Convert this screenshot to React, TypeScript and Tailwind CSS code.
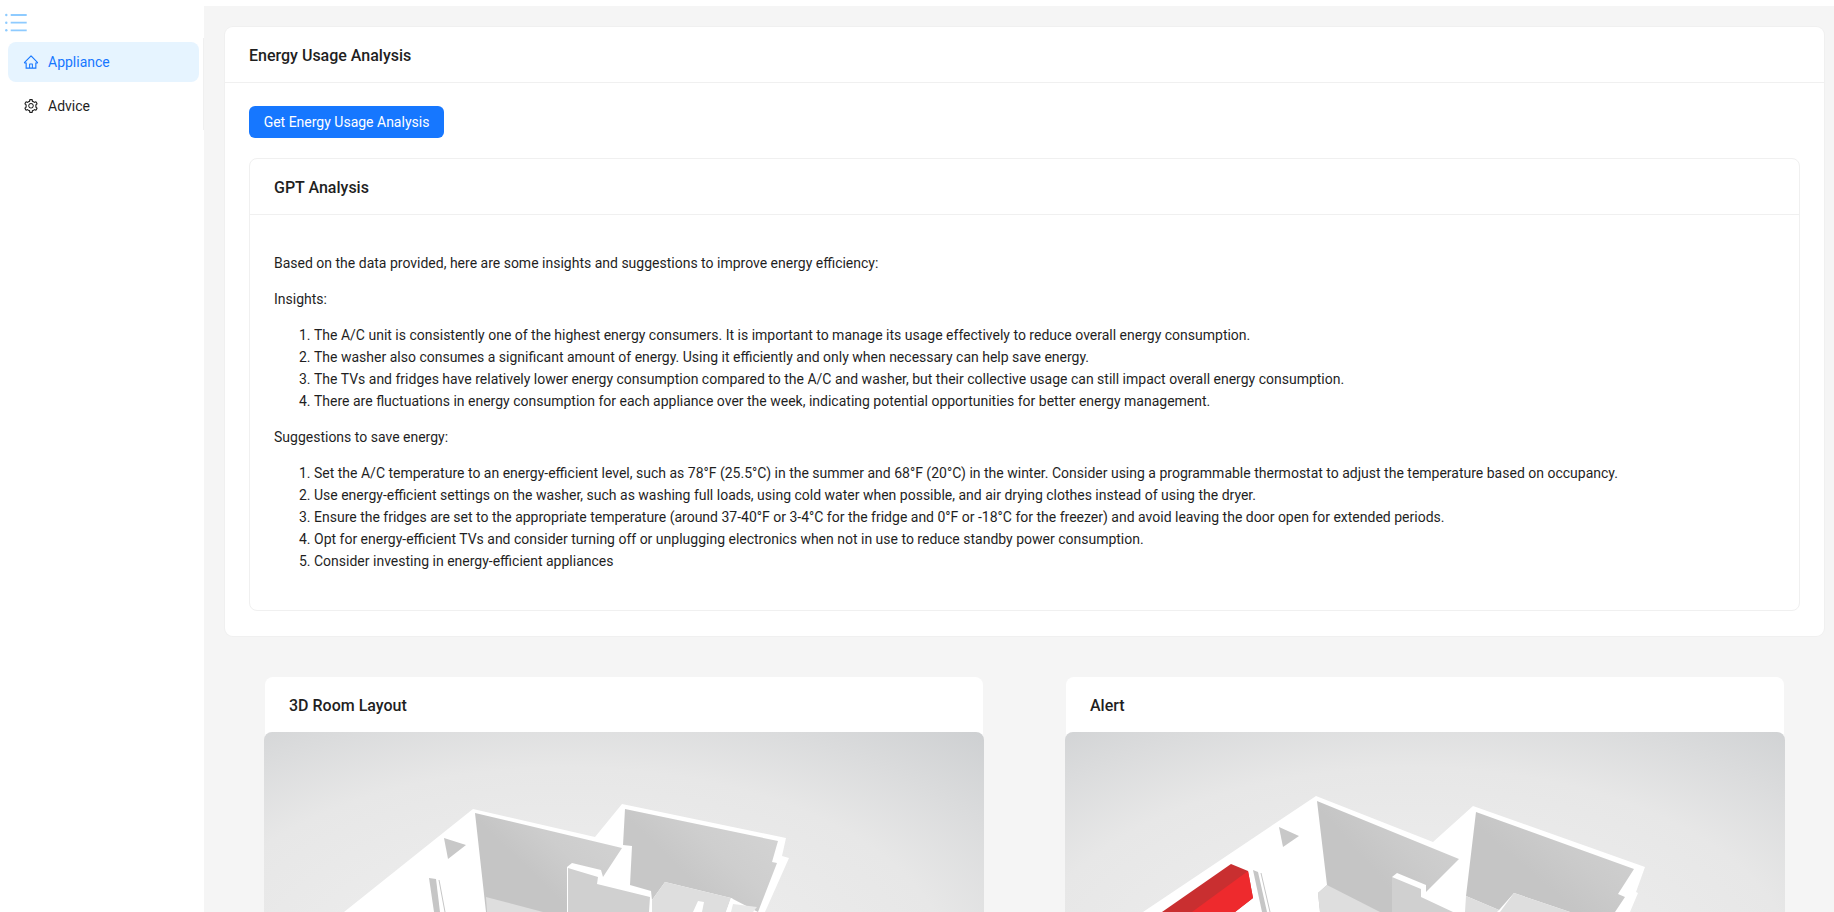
import React from 'react';
import { AiOutlineHome, AiOutlineSetting } from 'react-icons/ai';

const insights = [
  'The A/C unit is consistently one of the highest energy consumers. It is important to manage its usage effectively to reduce overall energy consumption.',
  'The washer also consumes a significant amount of energy. Using it efficiently and only when necessary can help save energy.',
  'The TVs and fridges have relatively lower energy consumption compared to the A/C and washer, but their collective usage can still impact overall energy consumption.',
  'There are fluctuations in energy consumption for each appliance over the week, indicating potential opportunities for better energy management.',
];

const suggestions = [
  'Set the A/C temperature to an energy-efficient level, such as 78°F (25.5°C) in the summer and 68°F (20°C) in the winter. Consider using a programmable thermostat to adjust the temperature based on occupancy.',
  'Use energy-efficient settings on the washer, such as washing full loads, using cold water when possible, and air drying clothes instead of using the dryer.',
  'Ensure the fridges are set to the appropriate temperature (around 37-40°F or 3-4°C for the fridge and 0°F or -18°C for the freezer) and avoid leaving the door open for extended periods.',
  'Opt for energy-efficient TVs and consider turning off or unplugging electronics when not in use to reduce standby power consumption.',
  'Consider investing in energy-efficient appliances',
];

const RoomLeft = () => (
  <svg width="720" height="180" viewBox="264 732 720 180" className="block">
    <defs>
      <linearGradient id="wallA" x1="0" y1="0.8" x2="1" y2="0.1">
        <stop offset="0.35" stopColor="#c5c5c5" />
        <stop offset="0.6" stopColor="#cdcdcd" />
        <stop offset="1" stopColor="#d3d3d3" />
      </linearGradient>
      <linearGradient id="wallB" x1="0" y1="0.8" x2="1" y2="0.1">
        <stop offset="0.35" stopColor="#c7c7c7" />
        <stop offset="0.6" stopColor="#cecece" />
        <stop offset="1" stopColor="#d4d4d4" />
      </linearGradient>
    </defs>
    <polygon fill="#fff" points="344,912 473,809 595,837 622,804 786,838 782,856 789,858 765,912" />
    <polygon fill="url(#wallA)" points="475,813 622,848 603,877 601,870 572,863 567,867 567,912 486,912" />
    <polygon fill="#dedede" points="486,897 543,912 487,912" />
    <polygon fill="#d0d0d0" points="568,868 598,877 597,884 650,897 649,912 568,912" />
    <polygon fill="url(#wallB)" points="625,809 778,841 772,862 777,863 758,912 731,898 665,882 652,900 651,891 630,885 632,846 623,845" />
    <polygon fill="#dedede" points="665,882 731,898 726,912 652,912 652,900" />
    <polygon fill="#fff" points="693,912 698,901 704,902 702,912" />
    <polygon fill="#e9e9e9" points="733,904 757,907 753,912 731,912" />
    <polygon fill="#fff" points="726,912 731,898 733,899 729,912" />
    <polygon fill="#c8c8c8" points="444,838 466,845 448,859" />
    <polygon fill="#c6c6c6" points="429,878 436,879 440,912 434,912" />
    <line x1="439" y1="880" x2="445" y2="912" stroke="#c6c6c6" strokeWidth="1" />
  </svg>
);

const RoomRight = () => (
  <svg width="720" height="180" viewBox="1065 732 720 180" className="block">
    <defs>
      <linearGradient id="wallC" x1="0" y1="0.8" x2="1" y2="0.1">
        <stop offset="0.35" stopColor="#c5c5c5" />
        <stop offset="0.6" stopColor="#cbcbcb" />
        <stop offset="1" stopColor="#d2d2d2" />
      </linearGradient>
      <linearGradient id="wallD" x1="0" y1="0.8" x2="1" y2="0.1">
        <stop offset="0.35" stopColor="#c5c5c5" />
        <stop offset="0.6" stopColor="#cbcbcb" />
        <stop offset="1" stopColor="#d2d2d2" />
      </linearGradient>
    </defs>
    <polygon fill="#fff" points="1143,912 1316,796 1433,842 1473,806 1645,867 1636,892 1638,893 1630,912" />
    <polygon fill="url(#wallC)" points="1317,801 1459,859 1426,892 1426,885 1397,873 1392,877 1392,912 1320,912 1318,893 1327,885" />
    <polygon fill="#dedede" points="1327,885 1380,912 1320,912 1318,893" />
    <polygon fill="#d0d0d0" points="1392,877 1421,889 1421,897 1453,912 1392,912" />
    <polygon fill="url(#wallD)" points="1476,812 1634,869 1618,894 1625,897 1615,912 1570,912 1514,893 1499,910 1466,896" />
    <polygon fill="#dedede" points="1466,896 1499,910 1497,912 1465,912" />
    <polygon fill="#dedede" points="1514,893 1570,912 1500,912" />
    <polygon fill="#c8c8c8" points="1279,827 1299,836 1283,847" />
    <polygon fill="#c92f30" points="1231,864 1248,871 1253,898 1235,912 1162,912" />
    <polygon fill="#ee2a2d" points="1248,871 1253,898 1235,912 1192,912" />
    <polygon fill="#c6c6c6" points="1253,870 1258,872 1267,912 1262,912" />
    <line x1="1261" y1="873" x2="1270" y2="912" stroke="#c6c6c6" strokeWidth="1" />
  </svg>
);

const App = () => {
  return (
    <div className="flex h-[912px] overflow-hidden bg-white font-['Roboto',sans-serif] text-sm leading-[22px] text-[#1f1f1f]">
      <aside className="relative w-[204px] shrink-0 bg-white">
        <div className="absolute right-0 top-[38px] h-[92px] w-px bg-[#f0f0f0]" />
        <svg width="24" height="20" viewBox="0 0 24 20" className="ml-[4px] mt-[13px] block" fill="none" stroke="#8ecbff">
          <path d="M6.7 2h16M6.7 9.7h16M6.7 17.3h16" strokeWidth="1.8" />
          <circle cx="2.3" cy="2" r="1.2" fill="#8ecbff" stroke="none" />
          <circle cx="2.3" cy="9.7" r="1.2" fill="#8ecbff" stroke="none" />
          <circle cx="2.3" cy="17.3" r="1.2" fill="#8ecbff" stroke="none" />
        </svg>
        <nav className="mt-[9px] flex flex-col gap-1 px-2">
          <a className="flex h-10 w-[191px] items-center gap-[9px] rounded-lg bg-[#e6f4ff] pl-[15px] text-[#1677ff]">
            <AiOutlineHome className="h-4 w-4" />
            <span>Appliance</span>
          </a>
          <a className="flex h-10 w-[191px] items-center gap-[9px] rounded-lg pl-[15px] text-[#1f1f1f]">
            <AiOutlineSetting className="h-4 w-4" />
            <span>Advice</span>
          </a>
        </nav>
      </aside>

      <main className="mt-[6px] flex-1 bg-[#f5f5f5] pl-[21px] pr-[10px] pt-[21px]">
        <section className="rounded-lg bg-white shadow-[0_0_0_1px_#f0f0f0]">
          <div className="flex h-[56px] items-center border-b border-[#f0f0f0] px-6 pt-[2px] text-base font-medium">
            Energy Usage Analysis
          </div>
          <div className="px-6 pb-[25px] pt-[23px]">
            <button className="h-8 w-[195px] rounded-md bg-[#1677ff] text-white">Get Energy Usage Analysis</button>
            <div className="mt-5 rounded-lg border border-[#f0f0f0]">
              <div className="flex h-[56px] items-center border-b border-[#f0f0f0] px-6 pt-[2px] text-base font-medium">
                GPT Analysis
              </div>
              <div className="px-6 pb-6 pt-[37px]">
                <p className="mb-[14px]">Based on the data provided, here are some insights and suggestions to improve energy efficiency:</p>
                <p className="mb-[14px]">Insights:</p>
                <ol className="mb-[14px] list-decimal pl-10">
                  {insights.map((t) => (
                    <li key={t}>{t}</li>
                  ))}
                </ol>
                <p className="mb-[14px]">Suggestions to save energy:</p>
                <ol className="mb-[14px] list-decimal pl-10">
                  {suggestions.map((t) => (
                    <li key={t}>{t}</li>
                  ))}
                </ol>
              </div>
            </div>
          </div>
        </section>

        <div className="mt-[41px] grid grid-cols-2 gap-x-[83px] px-[40px]">
          <section className="rounded-lg bg-white">
            <div className="flex h-[55px] items-center px-6 pt-[2px] text-base font-medium">3D Room Layout</div>
            <div className="-mx-px h-[400px] overflow-hidden rounded-lg bg-[radial-gradient(ellipse_620px_330px_at_42%_60%,#f1f1f1_0%,#e7e7e7_62%,#cdcfd1_100%)]">
              <RoomLeft />
            </div>
          </section>
          <section className="rounded-lg bg-white">
            <div className="flex h-[55px] items-center px-6 pt-[2px] text-base font-medium">Alert</div>
            <div className="-mx-px h-[400px] overflow-hidden rounded-lg bg-[radial-gradient(ellipse_620px_330px_at_48%_60%,#f1f1f1_0%,#e7e7e7_62%,#cdcfd1_100%)]">
              <RoomRight />
            </div>
          </section>
        </div>
      </main>
    </div>
  );
};

export default App;
